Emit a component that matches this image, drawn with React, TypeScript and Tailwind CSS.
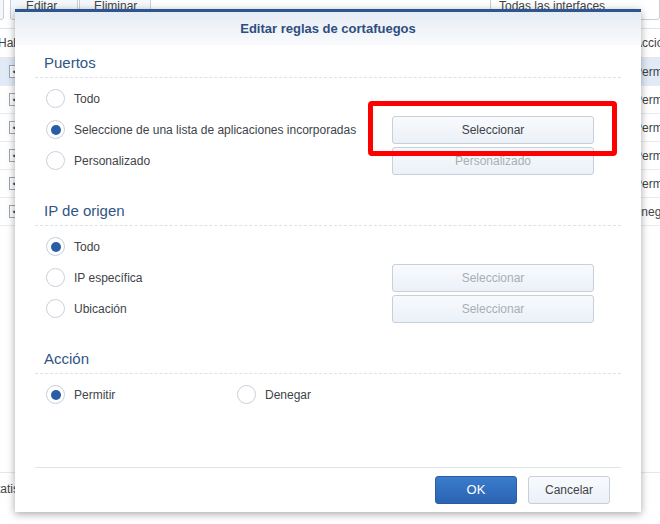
import React from 'react';

const font = { fontFamily: '"Liberation Sans", Arial, sans-serif' };

const Radio = ({ checked }: { checked?: boolean }) => (
  <span
    className={`flex h-[19px] w-[19px] shrink-0 items-center justify-center rounded-full border bg-white ${
      checked ? 'border-[#c3d0e0]' : 'border-[#c9d1db]'
    }`}
  >
    {checked && <span className="h-[10px] w-[10px] rounded-full bg-[#2a5da6]" />}
  </span>
);

const Btn = ({ label, disabled }: { label: string; disabled?: boolean }) => (
  <button
    className={`h-[28px] w-[202px] rounded-[3px] border border-[#c7cfd9] bg-gradient-to-b from-[#f8fafd] to-[#ebf1f8] text-[12px] ${
      disabled ? 'text-[#a9aeb4]' : 'text-[#3f4245]'
    }`}
  >
    {label}
  </button>
);

const Row = ({ label, checked, button, disabled }: { label: string; checked?: boolean; button?: string; disabled?: boolean }) => (
  <div className="flex h-[31px] items-center">
    <div className="flex flex-1 items-center gap-[9px] pl-[11px]">
      <Radio checked={checked} />
      <span className="text-[12px] text-[#404448]">{label}</span>
    </div>
    {button && (
      <div className="mr-[27px]">
        <Btn label={button} disabled={disabled} />
      </div>
    )}
  </div>
);

const Section = ({ title, children, className }: { title: string; children: React.ReactNode; className: string }) => (
  <div className={className}>
    <div className="border-b border-dashed border-[#dde2e8] pb-[4px] pl-[9px] text-[15px] leading-[20px] text-[#2f5686]">
      {title}
    </div>
    <div className="mt-[5px]">{children}</div>
  </div>
);

const bgRows = ['Permitir', 'Permitir', 'Permitir', 'Permitir', 'Permitir', 'Denegar'];

export default function App() {
  return (
    <div className="relative h-[524px] w-[660px] overflow-hidden bg-white" style={font}>
      {/* background window */}
      <div className="flex h-[29px] items-start border-b border-[#dfe4ea]">
        <div className="-mt-[8px] flex h-[28px] w-full items-center">
          <div className="-ml-[60px] h-full w-[64px] rounded-[3px] border border-[#c7cfd9] bg-[#f5f8fb]" />
          <div className="ml-[6px] flex h-full w-[68px] items-center rounded-[3px] border border-[#c7cfd9] bg-[#f5f8fb] pl-[15px] text-[12px] text-[#404448]">
            Editar
          </div>
          <div className="ml-[1px] flex h-full w-[72px] items-center rounded-[3px] border border-[#c7cfd9] bg-[#f5f8fb] pl-[14px] text-[12px] text-[#404448]">
            Eliminar
          </div>
          <div className="ml-auto flex h-full w-[170px] items-center rounded-[3px] border border-[#c7cfd9] bg-white pl-[8px] text-[12px] text-[#404448]">
            Todas las interfaces
          </div>
        </div>
      </div>
      <div className="flex h-[29px] items-center justify-between border-b border-[#e4e8ed] text-[12px] text-[#404448]">
        <span className="-ml-[2px]">Habilitado</span>
        <span className="-mr-[24px] w-[50px]">Acción</span>
      </div>
      {bgRows.map((r, i) => (
        <div
          key={i}
          className={`flex h-[28px] items-center justify-between border-b border-[#e8ecf0] text-[12px] text-[#404448] ${
            i === 0 ? 'bg-[#e1ebf7]' : ''
          }`}
        >
          <span className="ml-[9px] flex h-[13px] w-[13px] items-center justify-center border border-[#9aa6b3] bg-white text-[9px] leading-none text-[#2c4f7c]">
            ✔
          </span>
          <span className={`-mr-[24px] w-[50px] ${r === 'Denegar' ? '-indent-[8px]' : ''}`}>{r}</span>
        </div>
      ))}
      <div className="mt-[246px] flex h-[33px] items-center border-t border-[#e4e8ed] text-[12px] text-[#404448]">
        <span className="-ml-[17px]">Estatis</span>
      </div>

      {/* dialog */}
      <div className="absolute left-[15px] top-[9px] flex h-[503px] w-[626px] flex-col border-t-[3px] border-[#2c5690] bg-white shadow-[0_2px_8px_rgba(0,0,0,0.35)]">
        <div className="flex h-[33px] shrink-0 items-center justify-center bg-gradient-to-b from-[#e6ecf4] to-[#f9fbfd] text-[13px] font-bold text-[#2d4e7e]">
          Editar reglas de cortafuegos
        </div>
        <div className="flex-1 px-[20px]">
          <Section title="Puertos" className="mt-[8px]">
            <Row label="Todo" />
            <Row label="Seleccione de una lista de aplicaciones incorporadas" checked button="Seleccionar" />
            <Row label="Personalizado" button="Personalizado" disabled />
          </Section>
          <Section title="IP de origen" className="mt-[25px]">
            <Row label="Todo" checked />
            <Row label="IP específica" button="Seleccionar" disabled />
            <Row label="Ubicación" button="Seleccionar" disabled />
          </Section>
          <Section title="Acción" className="mt-[25px]">
            <div className="flex h-[31px] items-center pl-[11px]">
              <div className="flex w-[191px] items-center gap-[9px]">
                <Radio checked />
                <span className="text-[12px] text-[#404448]">Permitir</span>
              </div>
              <div className="flex items-center gap-[9px]">
                <Radio />
                <span className="text-[12px] text-[#404448]">Denegar</span>
              </div>
            </div>
          </Section>
        </div>
        <div className="mx-[20px] flex justify-end gap-[11px] border-t border-[#dfe4ea] pb-[8px] pr-[11px] pt-[8px]">
          <button className="h-[28px] w-[82px] rounded-[3px] border border-[#2a5ca3] bg-gradient-to-b from-[#3a7ccc] to-[#2a64b2] text-[13px] text-white">
            OK
          </button>
          <button className="h-[28px] w-[82px] rounded-[3px] border border-[#c7cfd9] bg-gradient-to-b from-[#f8fafd] to-[#ebf1f8] text-[12px] text-[#3f4245]">
            Cancelar
          </button>
        </div>
      </div>

      {/* highlight */}
      <div className="pointer-events-none absolute left-[368px] top-[101px] h-[55px] w-[249px] rounded-[4px] border-[5px] border-[#ff0000]" />
    </div>
  );
}
